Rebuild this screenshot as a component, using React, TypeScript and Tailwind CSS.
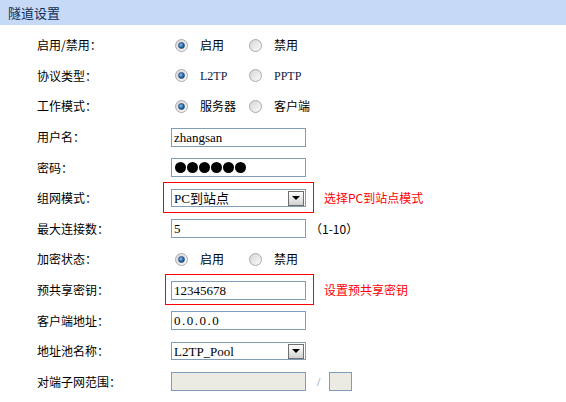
import type { ReactNode } from "react";

const cjk = "font-['Noto_Sans_CJK_SC',sans-serif]";
const serif = "font-['Liberation_Serif','Noto_Sans_CJK_SC',serif]";

function Radio({ checked }: { checked?: boolean }) {
  return (
    <span className="flex h-[13px] w-[13px] shrink-0 items-center justify-center rounded-full border border-[#a9a9a9] bg-gradient-to-br from-[#d6d6d6] to-[#fbfbfb]">
      {checked && (
        <span className="h-[7px] w-[7px] rounded-full border border-[#2a4f7a] bg-[radial-gradient(circle_at_35%_35%,#8cc8f0,#1760a8_60%,#0b3e75)]" />
      )}
    </span>
  );
}

function RadioGroup({ options, latin }: { options: string[]; latin?: boolean }) {
  return (
    <div className="flex items-center pl-[4px]">
      {options.map((o, i) => (
        <div key={o} className="flex w-[74px] items-center">
          <Radio checked={i === 0} />
          <span className={`ml-[12px] text-[12px] ${latin ? serif + " text-[#101840]" : cjk}`}>{o}</span>
        </div>
      ))}
    </div>
  );
}

function TextBox({ value, disabled, w = "w-[135px]" }: { value?: ReactNode; disabled?: boolean; w?: string }) {
  return (
    <div
      className={`flex h-[19px] ${w} items-center border border-[#7f9db9] pl-[2px] text-[13px] leading-none ${serif} ${
        disabled ? "bg-[#ebeae3]" : "bg-white"
      }`}
    >
      {value}
    </div>
  );
}

function Select({ value }: { value: string }) {
  return (
    <div className={`flex h-[18px] w-[135px] items-center justify-between border border-[#7f9db9] bg-white pl-[2px] pr-[1px] text-[13px] leading-none ${serif}`}>
      <span>{value}</span>
      <span className="flex h-[15px] w-[16px] items-center justify-center border border-[#6e6e6e] bg-gradient-to-b from-white to-[#d2d2d2]">
        <span className="h-0 w-0 border-x-[4px] border-t-[4px] border-x-transparent border-t-black" />
      </span>
    </div>
  );
}

function Row({ label, children }: { label: string; children: ReactNode }) {
  return (
    <div className="flex h-[30.6px] items-center">
      <div className={`w-[134px] text-[12px] text-black ${cjk}`}>{label}</div>
      <div className="flex items-center">{children}</div>
    </div>
  );
}

export default function App() {
  return (
    <div className="h-[402px] w-[566px] overflow-hidden bg-white">
      <div className={`flex h-[25px] items-center bg-[#c6daf8] pl-[8px] text-[13px] text-[#0f2a55] ${cjk}`}>
        隧道设置
      </div>
      <div className="pl-[37px] pt-[5px]">
        <Row label="启用/禁用：">
          <RadioGroup options={["启用", "禁用"]} />
        </Row>
        <Row label="协议类型：">
          <RadioGroup options={["L2TP", "PPTP"]} latin />
        </Row>
        <Row label="工作模式：">
          <RadioGroup options={["服务器", "客户端"]} />
        </Row>
        <Row label="用户名：">
          <TextBox value="zhangsan" />
        </Row>
        <Row label="密码：">
          <TextBox
            value={
              <div className="flex gap-[1px] pl-[1px]">
                {[0, 1, 2, 3, 4, 5].map((d) => (
                  <span key={d} className="h-[11px] w-[11px] rounded-full bg-black" />
                ))}
              </div>
            }
          />
        </Row>
        <Row label="组网模式：">
          <div className="relative">
            <Select value="PC到站点" />
            <span className="pointer-events-none absolute -bottom-[6px] -left-[8px] -right-[8px] -top-[7px] border border-[#ff0000]" />
          </div>
          <span className={`ml-[18px] text-[12px] text-[#ff0000] ${cjk}`}>选择PC到站点模式</span>
        </Row>
        <Row label="最大连接数：">
          <TextBox value="5" />
          <span className={`ml-[4px] text-[12px] text-black ${cjk}`}>（1-10）</span>
        </Row>
        <Row label="加密状态：">
          <RadioGroup options={["启用", "禁用"]} />
        </Row>
        <Row label="预共享密钥：">
          <div className="relative">
            <TextBox value="12345678" />
            <span className="pointer-events-none absolute -bottom-[5px] -left-[6px] -right-[8px] -top-[7px] border border-[#ff0000]" />
          </div>
          <span className={`ml-[18px] text-[12px] text-[#ff0000] ${cjk}`}>设置预共享密钥</span>
        </Row>
        <Row label="客户端地址：">
          <TextBox value={<span className="tracking-[1.5px]">0.0.0.0</span>} />
        </Row>
        <Row label="地址池名称：">
          <Select value="L2TP_Pool" />
        </Row>
        <Row label="对端子网范围：">
          <TextBox disabled />
          <span className={`ml-[11px] text-[12px] text-[#7a8aa8] ${serif}`}>/</span>
          <div className="ml-[9px]">
            <TextBox disabled w="w-[23px]" />
          </div>
        </Row>
      </div>
    </div>
  );
}
